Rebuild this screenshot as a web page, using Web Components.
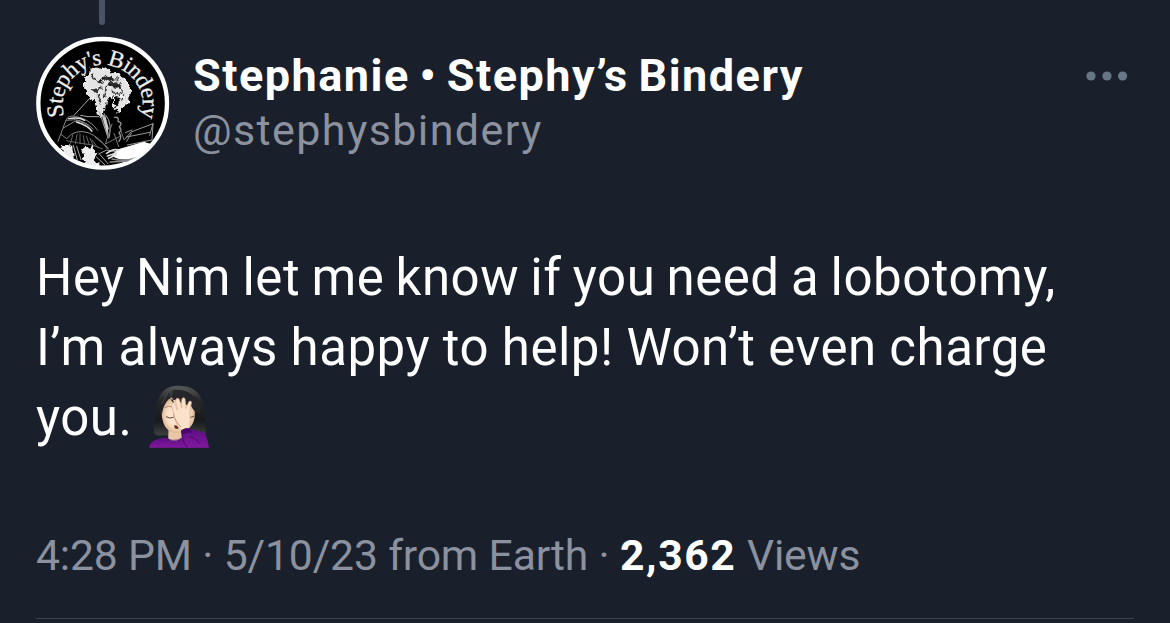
<!DOCTYPE html>
<html lang="en">
<head>
<meta charset="utf-8">
<title>Post</title>
<style>
  body {
    margin: 0;
    background: #19202b;
    color: #fff;
    font-family: Roboto, "Liberation Sans", sans-serif;
  }
</style>
</head>
<body>
<post-card></post-card>

<script>
class UserAvatar extends HTMLElement {
  constructor() {
    super();
    this.attachShadow({ mode: 'open' }).innerHTML = `
      <style>
        :host { display: block; width: 134px; height: 134px; }
        svg { display: block; }
        text { font: 70px "Liberation Serif", serif; fill: #eee; stroke: #eee; stroke-width: .8px; }
      </style>
      <svg width="134" height="134" viewBox="18 108 402 402">
        <defs>
          <path id="arc" d="M103 349A120 120 0 1 1 333 349"/>
          <clipPath id="disc"><circle cx="218" cy="310" r="190"/></clipPath>
          <filter id="rough" x="-10%" y="-10%" width="120%" height="120%">
            <feTurbulence type="fractalNoise" baseFrequency=".07" numOctaves="3" seed="4"/>
            <feDisplacementMap in="SourceGraphic" scale="22" xChannelSelector="R" yChannelSelector="G"/>
          </filter>
        </defs>
        <circle cx="218" cy="310" r="193" fill="#000" stroke="#fff" stroke-width="13"/>
        <g clip-path="url(#disc)" fill="none" stroke="#bbb" stroke-width="3" stroke-linecap="round" stroke-linejoin="round">
          <!-- hair -->
          <g filter="url(#rough)">
            <path d="M178 216q18-20 38-7q22-8 23 13q30-7 43 15q22 16 15 45q2 28-17 38q-13 25-24 6q10-16 5-33q-15 5-20-8q-14 14-17 40l-8 28l-14-8q-2-27-8-45q-26-5-25-34q-9-28 9-50z" fill="#e4e4e4" stroke="#fff"/>
            <path d="M234 230q26-2 42 22q8 14 6 26q-12-20-30-24q-16-4-24-14z" fill="#333" stroke="none"/>
            <path d="M246 296q12-10 22-4q4 12-2 24q-12 8-20-2z" fill="#000" stroke="none"/>
            <path d="M208 243q20-15 43-5q24 10 20 28q-18-16-35-10" stroke="#222" stroke-width="7"/>
            <path d="M186 226l12 18M184 265l20 7M202 286l10 22M230 260l-8 34M222 222l10 15M258 290q12-12 24-10M212 262l-10 12M276 300l12-8M246 274l10 8" stroke="#333" stroke-width="5"/>
            <path d="M244 240q14 2 20 12M256 238q14 8 20 20" stroke="#ddd" stroke-width="4"/>
            <path d="M251 291q-5 18 3 25M266 288q12-5 20 5" stroke="#fff" stroke-width="5"/>
          </g>
          <!-- neck and collar -->
          <path d="M180 294l-48 52M206 350h-32l-22-4M208 335l26 78M222 340q10 26 12 72M228 346q20 25 9 68" stroke="#aaa"/>
          <path d="M218 346l14 50M224 352l10 34" stroke="#ccc" stroke-width="5"/>
          <path d="M254 352q14-2 10 12q16 4 4 16q10 10-1 18q10 14 0 26" stroke="#999" stroke-width="4"/>
          <!-- sleeve -->
          <path d="M84 424l24-64q6-15 28-11q42 7 67 42M100 384l38-22q28 2 47 29M109 361l27-2q34 6 54 29M94 404l16 12q25-30 65-18q34 14 57 48" stroke="#888"/>
          <path d="M139 366q34 10 47 28M116 356q30-6 48 5" stroke="#ddd" stroke-width="4"/>
          <path d="M122 430l6-25M136 432l5-28M150 430v-28M164 433l-4-26M178 434l-9-26M191 439l-11-24M204 444l-18-24M110 422l36 7l42 6l30 12" stroke="#666"/>
          <path d="M196 412q23 18 40 33M246 372l-20 60l42-22M252 400l14 40M270 385l12 34" stroke="#777"/>
          <!-- lap -->
          <g filter="url(#rough)">
            <path d="M92 436l33 2l6 50q-25-13-39-52z" fill="#eee" stroke="#fff"/>
            <path d="M152 448q24-9 39-8q-6 14 11 22l-13 14l20 24q-34-1-48-17l4-18z" fill="#eee" stroke="#fff"/>
          </g>
          <path d="M130 436l12 44M140 439l13 40M206 462l24-12l24 4M198 470l26 24M210 464l24 27" stroke="#aaa"/>
          <!-- book -->
          <path d="M284 418l19-22l66-25l-3 49l-74 15M290 411l70-14M286 398l20-8M304 400l-14 24M369 371l-10 35" stroke="#999"/>
          <path d="M262 450l79-23l24 7q-30 42-79 43q-24 1-38-10z" fill="#fff" stroke="#fff"/>
          <path d="M246 477q66 14 112-26M240 486l63-3" stroke="#888" stroke-width="4"/>
          <path d="M230 460q22-16 36-9M232 468l28-9M236 475l22-10" stroke="#ddd" stroke-width="5"/>
        </g>
        <text textLength="450" lengthAdjust="spacing"><textPath href="#arc">Stephy's Bindery</textPath></text>
      </svg>`;
  }
}

class FacepalmEmoji extends HTMLElement {
  constructor() {
    super();
    this.attachShadow({ mode: 'open' }).innerHTML = `
      <style>
        :host { display: inline-block; width: 62px; height: 63px; margin-left: 2px; vertical-align: -13px; }
        svg { display: block; }
      </style>
      <svg width="62" height="63" viewBox="20 30 186 189">
        <defs>
          <linearGradient id="hair" x2="0" y2="1">
            <stop offset="0" stop-color="#555759"/>
            <stop offset=".3" stop-color="#252628"/>
            <stop offset=".7" stop-color="#18191b"/>
            <stop offset="1" stop-color="#3f4042"/>
          </linearGradient>
          <radialGradient id="skin">
            <stop offset="0" stop-color="#ffebd5"/>
            <stop offset=".7" stop-color="#f9dfc5"/>
            <stop offset="1" stop-color="#dfb997"/>
          </radialGradient>
          <linearGradient id="shirt" x2="0" y2="1">
            <stop offset="0" stop-color="#5d0e83"/>
            <stop offset="1" stop-color="#80189f"/>
          </linearGradient>
        </defs>
        <path d="M37 174C42 137 38 97 55 63C69 38 89 31 116 32C154 33 176 52 184 82C193 113 190 147 194 173C181 184 162 183 150 181H65Q45 184 37 174z" fill="url(#hair)"/>
        <path d="M82 158h42v42H80z" fill="#e8c6a8"/>
        <path d="M23 218C28 198 44 190 77 188C88 201 113 200 124 187L151 218z" fill="url(#shirt)"/>
        <path d="M77 188Q82 195 94 196Q112 198 124 187" fill="none" stroke="#3f0b5a" stroke-width="2"/>
        <path d="M80 69C62 85 58 108 64 136C70 162 87 174 105 174C134 173 157 156 160 125Q164 91 136 77Q106 66 80 69z" fill="url(#skin)"/>
        <path d="M55 115C59 87 74 68 84 47C83 67 88 77 99 85Q88 65 95 46Q135 39 165 70Q178 86 176 117Q156 109 150 94Q122 87 104 76L83 72Q67 87 62 116z" fill="#252629"/>
        <path d="M84 47Q72 69 61 85M99 38Q135 38 158 62" fill="none" stroke="#606164" stroke-width="3" opacity=".6"/>
        <path d="M70 98Q80 91 93 96" fill="none" stroke="#b08d70" stroke-width="3"/>
        <path d="M74 125Q84 132 97 127M143 126Q149 129 158 123" fill="none" stroke="#5b493c" stroke-width="3"/>
        <path d="M98 151Q106 149 114 158Q106 165 100 159z" fill="#633922"/>
        <path d="M118 164C103 151 102 131 96 113L91 91Q90 82 96 83Q100 83 103 94L108 105L103 79Q102 70 109 70Q114 70 116 80L121 99L121 76Q121 68 127 68Q132 68 132 79L134 101L141 83Q144 76 149 79Q152 82 148 94Q143 112 147 133Q146 153 141 165z" fill="#fce2ca" stroke="#d8ae8b" stroke-width="2"/>
        <path d="M96 115Q101 140 119 156" fill="none" stroke="#c5987a" stroke-width="3"/>
        <path d="M119 167Q134 156 148 162L191 174Q199 192 203 218H132Q121 195 119 167z" fill="url(#shirt)"/>
        <path d="M119 167Q134 156 148 162L153 174Q137 171 122 180z" fill="#4a086c"/>
        <path d="M122 180Q124 201 138 218M144 184Q162 189 176 205" fill="none" stroke="#4a086c" stroke-width="3"/>
      </svg>`;
  }
}

class MoreButton extends HTMLElement {
  constructor() {
    super();
    this.attachShadow({ mode: 'open' }).innerHTML = `
      <style>
        :host { display: block; }
        svg { display: block; fill: #697685; }
      </style>
      <svg width="42" height="10" viewBox="0 0 42 10">
        <circle cx="5" cy="5" r="4.6"/>
        <circle cx="21" cy="5" r="4.6"/>
        <circle cx="36.6" cy="5" r="4.6"/>
      </svg>`;
  }
}

class PostAuthor extends HTMLElement {
  constructor() {
    super();
    this.attachShadow({ mode: 'open' }).innerHTML = `
      <style>
        :host { display: flex; align-items: flex-start; }
        .names { flex: 1; margin-left: 23px; padding-top: 13px; white-space: nowrap; }
        .name, .handle { line-height: 54px; }
        .name { font-size: 45px; font-weight: 700; letter-spacing: 1.5px; word-spacing: -3px; }
        .handle { font-size: 43px; letter-spacing: 1.4px; color: #8b919f; }
        more-button { margin: 35px 42px 0 0; }
      </style>
      <user-avatar></user-avatar>
      <div class="names">
        <div class="name"><slot name="name"></slot></div>
        <div class="handle"><slot name="handle"></slot></div>
      </div>
      <more-button></more-button>`;
  }
}

class PostStats extends HTMLElement {
  constructor() {
    super();
    this.attachShadow({ mode: 'open' }).innerHTML = `
      <style>
        :host {
          display: block;
          font-size: 42.7px;
          line-height: 50px;
          letter-spacing: -.17px;
          color: #8b919f;
          white-space: nowrap;
        }
        ::slotted(b) { color: #fff; letter-spacing: 1.6px; }
      </style>
      <slot></slot>`;
  }
}

class PostCard extends HTMLElement {
  constructor() {
    super();
    this.attachShadow({ mode: 'open' }).innerHTML = `
      <style>
        :host {
          display: flex;
          flex-direction: column;
          box-sizing: border-box;
          height: 623px;
          padding-left: 36px;
          overflow: hidden;
        }
        .thread { width: 6px; height: 25px; margin-left: 63px; border-radius: 0 0 3px 3px; background: #465465; }
        post-author { margin-top: 11px; height: 134px; }
        .body { margin-top: 73px; font-size: 51px; line-height: 70px; letter-spacing: .5px; white-space: nowrap; }
        .body div { height: 70px; }
        .l1 { word-spacing: -1.8px; }
        .l2 { word-spacing: -.4px; }
        post-stats { margin-top: 77px; }
        .rule { height: 1px; margin: 38px 36px 0 0; background: #38434f; }
      </style>
      <div class="thread"></div>
      <post-author>
        <span slot="name">Stephanie • Stephy’s Bindery</span>
        <span slot="handle">@stephysbindery</span>
      </post-author>
      <div class="body">
        <div class="l1">Hey Nim let me know if you need a lobotomy,</div>
        <div class="l2">I’m always happy to help! Won’t even charge</div>
        <div class="l3">you. <facepalm-emoji role="img" aria-label="Face palm"></facepalm-emoji></div>
      </div>
      <post-stats>4:28 PM · 5/10/23 from Earth · <b>2,362</b> Views</post-stats>
      <div class="rule"></div>`;
  }
}

customElements.define('user-avatar', UserAvatar);
customElements.define('facepalm-emoji', FacepalmEmoji);
customElements.define('more-button', MoreButton);
customElements.define('post-author', PostAuthor);
customElements.define('post-stats', PostStats);
customElements.define('post-card', PostCard);
</script>
</body>
</html>
